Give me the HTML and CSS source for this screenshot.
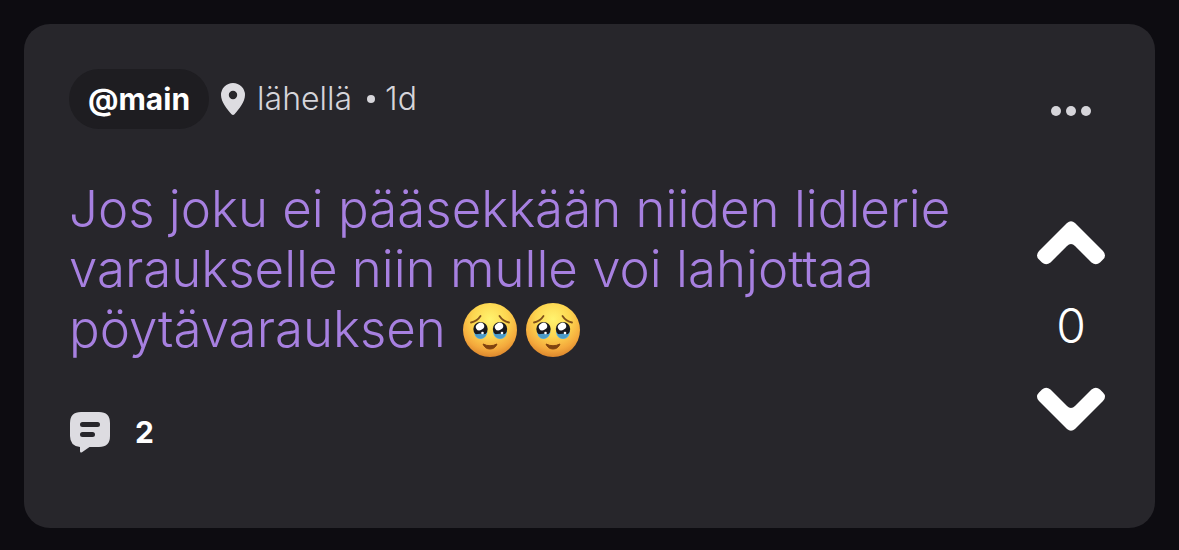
FILE: index.html
```html
<!DOCTYPE html>
<html lang="fi">
<head>
<meta charset="utf-8">
<meta name="viewport" content="width=device-width, initial-scale=1">
<title>@main</title>
<link rel="stylesheet" href="styles.css">
</head>
<body>
<svg class="defs" aria-hidden="true">
  <defs>
    <radialGradient id="face" cx=".5" cy=".3" r=".72">
      <stop offset="0" stop-color="#fff36f"/>
      <stop offset=".45" stop-color="#fdd650"/>
      <stop offset=".78" stop-color="#f4a93c"/>
      <stop offset="1" stop-color="#d9822b"/>
    </radialGradient>
    <symbol id="teary" viewBox="0 0 54 54">
      <circle cx="27" cy="27" r="27" fill="url(#face)"/>
      <path d="M8 19.500Q14 18.500 17.500 13M46 19.500Q40 18.500 36.500 13" fill="none" stroke="#80501a" stroke-width="1.800" stroke-linecap="round"/>
      <path d="M11 28Q11.500 36 17.500 36Q23 36 24.500 29ZM30 29Q31 36 37 36Q43.500 36 44 28Z" fill="#59b4e2"/>
      <ellipse cx="17.500" cy="26" rx="7.200" ry="7" fill="#18191f"/>
      <ellipse cx="37" cy="26" rx="7.200" ry="7" fill="#18191f"/>
      <path d="M12 31.500Q17.500 30 23.500 31.500Q21 35.500 17.500 35.500T12 31.500ZM31 31.500Q37 30 42.500 31.500Q40.500 35.500 37 35.500T31 31.500Z" fill="#4b9bc9"/>
      <ellipse cx="17" cy="23.500" rx="4.300" ry="3.600" fill="#fff" transform="rotate(-30 17 23.500)"/>
      <ellipse cx="36" cy="23.500" rx="4.300" ry="3.600" fill="#fff" transform="rotate(-30 36 23.500)"/>
      <circle cx="19.500" cy="30" r="1.300" fill="#fff"/>
      <circle cx="39" cy="30" r="1.300" fill="#fff"/>
      <path d="M20 41Q27 44.500 34 41Q32 46 27 46T20 41Z" fill="#80430f" stroke="#80430f" stroke-linejoin="round"/>
    </symbol>
  </defs>
</svg>
<article class="card">
  <div class="content">
    <header class="meta">
      <a class="channel" href="#">@main</a>
      <svg class="pin" viewBox="0 0 24 32" aria-hidden="true"><path fill-rule="evenodd" d="M12 0A12 12 0 0 0 0 12C0 19 6 26 10.500 31.300Q12 32.700 13.500 31.300C18 26 24 19 24 12A12 12 0 0 0 12 0ZM12 7.800A4.200 4.200 0 1 1 12 16.200A4.200 4.200 0 1 1 12 7.800Z"/></svg>
      <span class="place">lähellä</span>
      <span class="bullet"></span>
      <time>1d</time>
    </header>
    <p class="message">Jos joku ei pääsekkään niiden lidlerie varaukselle niin mulle voi lahjottaa pöytävarauksen <span class="emojis"><svg class="emoji" role="img" aria-label="Liikuttunut"><use href="#teary"/></svg><svg class="emoji" role="img" aria-label="Liikuttunut"><use href="#teary"/></svg></span></p>
    <button class="replies" type="button" aria-label="2 kommenttia">
      <svg class="bubble" viewBox="0 0 40 41" aria-hidden="true"><path fill="#dddce1" d="M11 0H29Q40 0 40 11V24Q40 35 29 35H19.500L12 40.300Q10 41.300 10 39V35Q0 34 0 24V11Q0 0 11 0Z"/><path d="M12.500 12.500H27.500M12.500 22.500H22.500" stroke="#27262b" stroke-width="5" stroke-linecap="round"/></svg>
      <span>2</span>
    </button>
  </div>
  <aside class="side">
    <button class="more" type="button" aria-label="Lisää"><svg viewBox="0 0 40 10" aria-hidden="true"><circle cx="5" cy="5" r="5"/><circle cx="20" cy="5" r="5"/><circle cx="35" cy="5" r="5"/></svg></button>
    <div class="votes">
      <button class="vote" type="button" aria-label="Ylös"><svg viewBox="0 0 68 44" aria-hidden="true"><path d="M30 2Q34-1.500 38 2L66 30Q70 34.500 66 38.500L63 41.500Q59 45 54.500 41.500L38 25Q34 21 30 25L13.500 41.500Q9 45 5 41.500L2 38.500Q-2 34.500 2 30Z"/></svg></button>
      <output class="score">0</output>
      <button class="vote" type="button" aria-label="Alas"><svg viewBox="0 0 68 44" aria-hidden="true"><path d="M30 42Q34 45.500 38 42L66 14Q70 9.500 66 5.500L63 2.500Q59-1 54.500 2.500L38 19Q34 23 30 19L13.500 2.500Q9-1 5 2.500L2 5.500Q-2 9.500 2 14Z"/></svg></button>
    </div>
  </aside>
</article>
</body>
</html>
```
FILE: styles.css
```css
* { box-sizing: border-box; }

body {
  margin: 0;
  padding: 24px;
  background: #0d0c11;
  font-family: Inter, "Liberation Sans", sans-serif;
}

button {
  margin: 0;
  padding: 0;
  border: 0;
  background: none;
  color: inherit;
  font: inherit;
  cursor: pointer;
}

svg { display: block; }

.defs {
  position: absolute;
  width: 0;
  height: 0;
}

.card {
  display: flex;
  justify-content: space-between;
  padding: 45px 50px 75px 45px;
  border-radius: 26px;
  background: #27262b;
  color: #fff;
}

.content {
  flex: 1;
  min-width: 0;
}

.meta {
  display: flex;
  align-items: center;
  color: #d6d5da;
  font-size: 32px;
  font-weight: 300;
  line-height: 36px;
}

.channel {
  margin-right: 12px;
  padding: 12px 19px;
  border-radius: 30px;
  background: #1e1d21;
  color: #fff;
  font-size: 30px;
  font-weight: 700;
  text-decoration: none;
}

.pin {
  width: 24px;
  height: 32px;
  margin-right: 12px;
  fill: #dddce1;
}

.bullet {
  width: 8px;
  height: 8px;
  margin: 0 10px 0 15px;
  border-radius: 50%;
  background: #d6d5da;
}

.message {
  margin: 50px 0 52px;
  color: #a780e0;
  font-size: 51px;
  font-weight: 300;
  line-height: 60px;
}

.emojis {
  display: inline-flex;
  gap: 9px;
  margin-left: 3px;
  vertical-align: -10px;
}

.emoji {
  width: 54px;
  height: 54px;
}

.replies {
  display: flex;
  align-items: center;
  gap: 25px;
  margin-left: 1px;
  font-size: 30px;
  font-weight: 700;
  line-height: 42px;
}

.bubble {
  width: 40px;
  height: 41px;
  fill: none;
}

.side {
  display: flex;
  flex-direction: column;
  align-items: center;
  width: 68px;
  padding-top: 37px;
}

.more svg {
  width: 40px;
  height: 10px;
  fill: #d6d5da;
}

.votes {
  display: flex;
  flex-direction: column;
  align-items: center;
  gap: 36px;
  margin-top: 105px;
}

.vote svg {
  width: 68px;
  height: 44px;
  fill: #fff;
}

.score {
  font-size: 48px;
  font-weight: 300;
  line-height: 50px;
}
```
